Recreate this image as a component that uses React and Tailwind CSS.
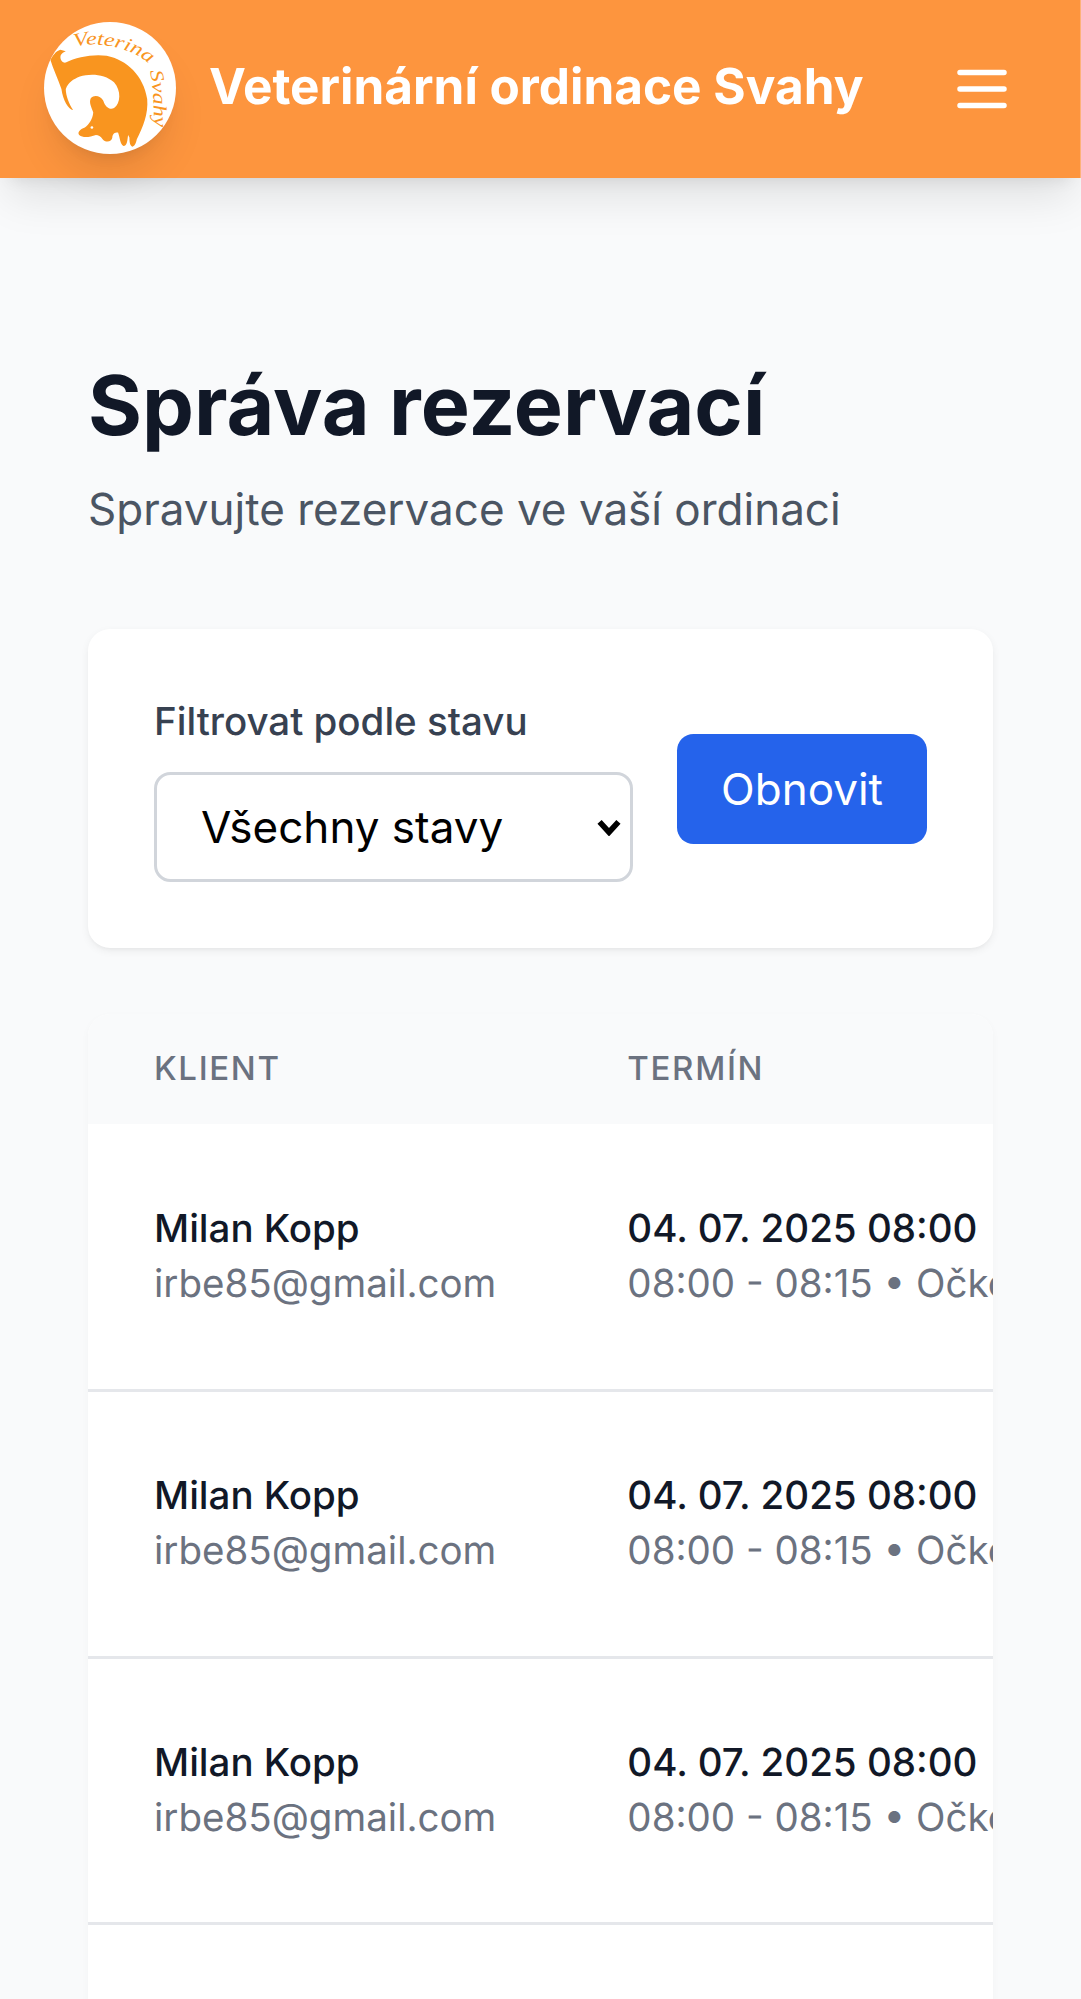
import React from "react";

const rows = [1, 2, 3, 4];

function Logo() {
  return (
    <svg viewBox="43 35 394 394" className="mb-[2px] h-[132px] w-[132px] shrink-0 rounded-full bg-white shadow-[0_27px_41px_-8px_rgba(0,0,0,0.1),0_11px_16px_-11px_rgba(0,0,0,0.1)]">
      <path
        fill="#f9951f"
        d="M62 148 C70 135 78 122 92 118 L108 122 C100 126 92 130 92 140 C92 150 100 158 108 156 C140 140 190 130 230 136 C290 148 340 195 351 265 C355 310 338 350 320 385 C318 395 314 405 307 407 C300 405 298 395 298 380 L294 372 C292 385 292 405 280 405 C270 400 270 380 264 365 C252 362 247 372 247 380 C245 395 225 395 218 385 C212 375 205 372 198 372 C180 378 160 382 148 372 C142 365 150 355 165 350 C178 340 188 325 190 305 C185 290 176 275 183 262 C193 250 213 256 220 270 C226 290 240 298 252 292 C272 278 274 240 252 215 C225 190 180 188 150 198 C130 206 116 215 108 235 C108 255 118 280 130 298 C115 295 100 270 95 235 C85 205 70 175 62 148 Z"
      />
      <circle cx="186" cy="350" r="4" fill="#fff" />
      <path id="logo-arc" fill="none" d="M134 110 C190 92 285 105 345 150 C372 185 368 280 374 368" />
      <text fill="#f9951f" fontSize="56" fontStyle="italic" fontFamily="'Liberation Serif', serif">
        <textPath href="#logo-arc" textLength="425" lengthAdjust="spacingAndGlyphs">Veterina Svahy</textPath>
      </text>
    </svg>
  );
}

export default function App() {
  return (
    <div className="h-[1999px] w-[1081px] overflow-hidden bg-[#f9fafb] font-['Inter',sans-serif] antialiased [text-rendering:geometricPrecision]">
      <header className="relative flex h-[178px] items-center justify-between border-r border-[#fdb27a] bg-[#fd953e] pl-[44px] pr-[65px] shadow-[0_27px_41px_-8px_rgba(0,0,0,0.1),0_11px_16px_-11px_rgba(0,0,0,0.1)]">
        <div className="flex items-center gap-[33px]">
          <Logo />
          <span className="mb-[6px] text-[49.5px] leading-[66px] font-bold text-white">Veterinární ordinace Svahy</span>
        </div>
        <svg viewBox="0 0 24 24" fill="none" stroke="#fff" strokeWidth="2" strokeLinecap="round" className="h-[66px] w-[66px]">
          <path d="M4 6h16M4 12h16M4 18h16" />
        </svg>
      </header>

      <main className="px-[88px] pt-[178px]">
        <h1 className="text-[82.5px] leading-[99px] font-bold text-[#111827]">Správa rezervací</h1>
        <p className="mt-[21px] text-[44px] leading-[66px] text-[#4b5563]">Spravujte rezervace ve vaší ordinaci</p>

        <div className="mt-[87px] flex items-center gap-[44px] rounded-[22px] bg-white p-[66px] shadow-[0_3px_8px_rgba(0,0,0,0.06),0_3px_5px_-3px_rgba(0,0,0,0.06)]">
          <div className="flex-1">
            <label className="mb-[22px] block text-[38.5px] leading-[55px] font-medium text-[#374151]">Filtrovat podle stavu</label>
            <div className="relative">
              <select className="h-[110px] w-full appearance-none rounded-[16.5px] border-[3px] border-[#d1d5db] bg-white pl-[44px] pr-[11px] text-[44px] text-black">
                <option>Všechny stavy</option>
              </select>
              <svg viewBox="0 0 24 18" fill="none" stroke="#000" strokeWidth="6" className="pointer-events-none absolute right-[12px] top-[47px] h-[17px] w-[24px]">
                <path d="M2 3l10 11L22 3" />
              </svg>
            </div>
          </div>
          <button type="button" className="h-[110px] rounded-[16.5px] bg-[#2563eb] px-[44px] text-[44px] text-white">Obnovit</button>
        </div>

        <div className="mt-[66px] overflow-hidden rounded-[22px] bg-white shadow-[0_3px_8px_rgba(0,0,0,0.03)]">
          <table className="border-collapse whitespace-nowrap text-left">
            <thead className="bg-[#f9fafb]">
              <tr className="h-[110px]">
                <th className="pl-[66px] pr-[65px] text-[33px] font-medium tracking-[1.65px] text-[#6b7280] uppercase">Klient</th>
                <th className="px-[66px] text-[33px] font-medium tracking-[1.65px] text-[#6b7280] uppercase">Termín</th>
              </tr>
            </thead>
            <tbody>
              {rows.map((row) => (
                <tr key={row} className="h-[266.67px] border-b-[3px] border-[#e5e7eb]">
                  <td className="pl-[66px] pr-[65px] text-[38.5px] leading-[55px]">
                    <div className="font-medium text-[#111827]">Milan Kopp</div>
                    <div className="text-[#6b7280]">irbe85@gmail.com</div>
                  </td>
                  <td className="px-[66px] text-[38.5px] leading-[55px]">
                    <div className="font-medium text-[#111827]">04. 07. 2025 08:00</div>
                    <div className="text-[#6b7280]">08:00 - 08:15 • Očkování</div>
                  </td>
                </tr>
              ))}
            </tbody>
          </table>
        </div>
      </main>
    </div>
  );
}
